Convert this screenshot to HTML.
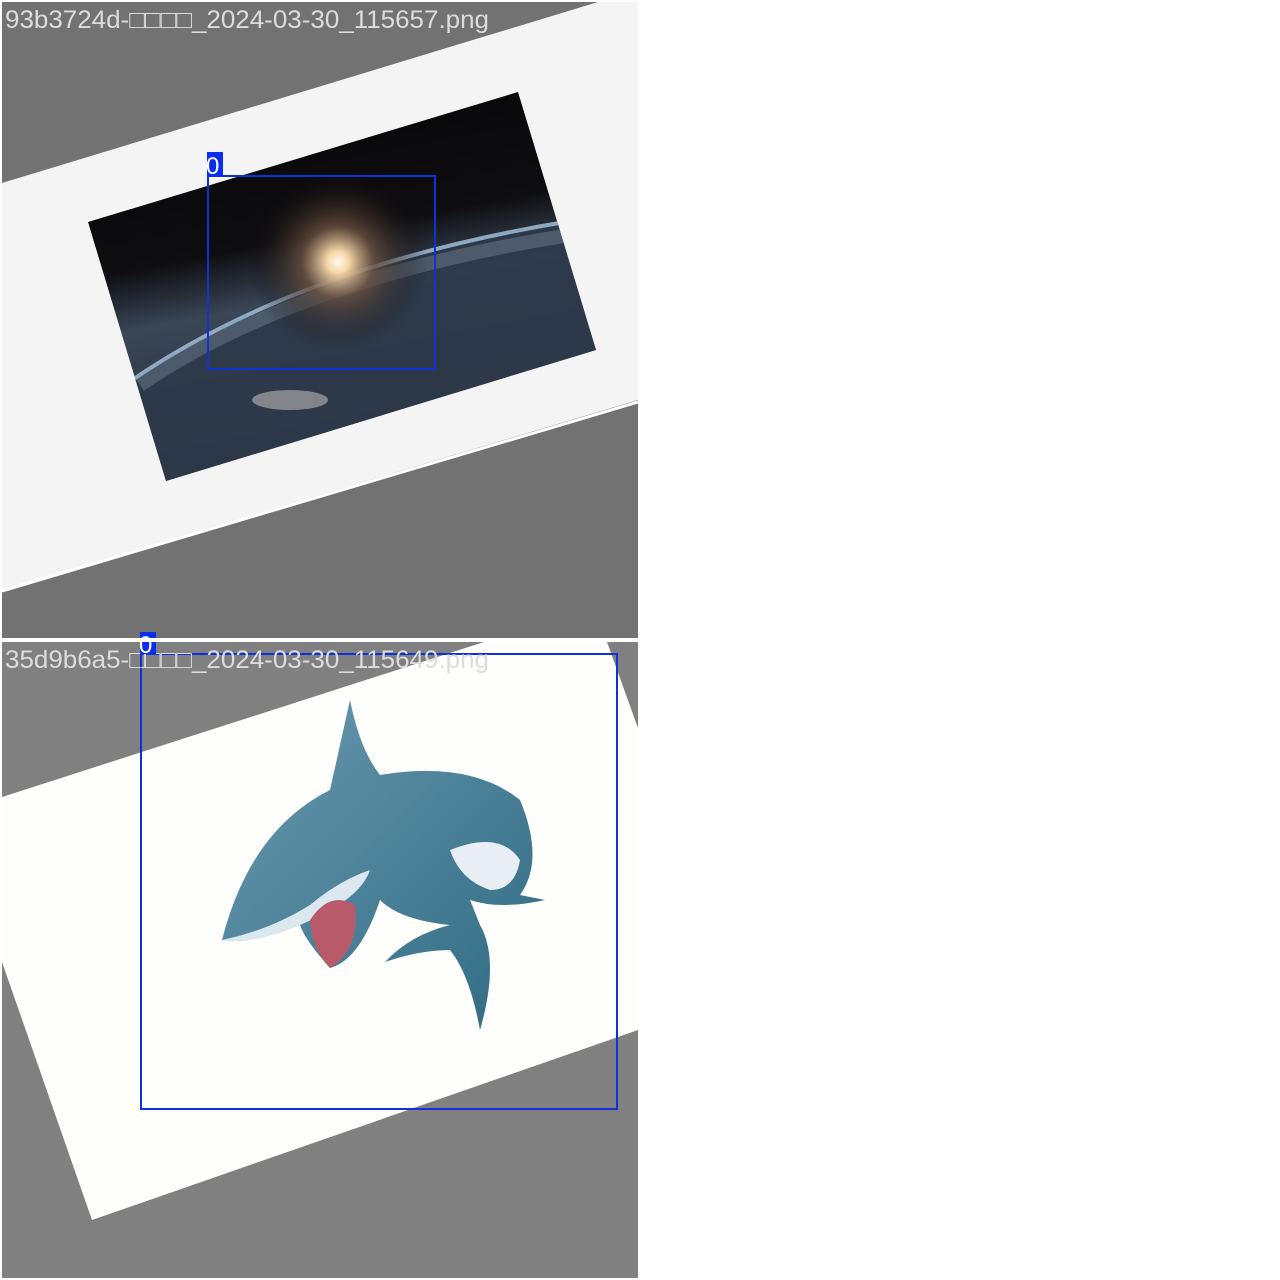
<!DOCTYPE html>
<html><head><meta charset="utf-8"><style>
html,body{margin:0;padding:0;background:#fff;width:1280px;height:1280px;overflow:hidden}
svg{display:block}
</style></head><body>
<svg width="1280" height="1280" viewBox="0 0 1280 1280" xmlns="http://www.w3.org/2000/svg">
<defs>
<radialGradient id="sun" cx="338" cy="262" r="90" gradientUnits="userSpaceOnUse">
<stop offset="0" stop-color="#fffaf0"/><stop offset="0.12" stop-color="#f6d8a8"/><stop offset="0.4" stop-color="#6a5040" stop-opacity="0.8"/><stop offset="1" stop-color="#0c0a0c" stop-opacity="0"/>
</radialGradient>
<linearGradient id="earth" x1="0" y1="0" x2="0.25" y2="1">
<stop offset="0" stop-color="#050404"/><stop offset="0.45" stop-color="#0e0d10"/><stop offset="0.6" stop-color="#3a4656"/><stop offset="1" stop-color="#222a36"/>
</linearGradient>
<linearGradient id="sk" x1="0" y1="0" x2="1" y2="1">
<stop offset="0" stop-color="#6a9ab0"/><stop offset="1" stop-color="#2e6a82"/>
</linearGradient>
<clipPath id="eclip"><polygon points="88,222 518,92 596,350 166,481"/></clipPath>
</defs>
<rect x="2" y="2" width="636" height="636" fill="#727272"/>
<polygon points="2,183 598,2 638,2 638,400 2,590" fill="#f4f4f4"/>
<line x1="2" y1="591" x2="638" y2="402" stroke="#fff" stroke-width="3"/>
<polygon points="88,222 518,92 596,350 166,481" fill="url(#earth)"/>
<g clip-path="url(#eclip)">
<path d="M120,390 Q300,260 600,215 L600,480 L120,480 Z" fill="#2e3a4a" opacity="0.9"/>
<path d="M125,385 Q300,262 590,218" stroke="#a8c4e0" stroke-width="4" fill="none" opacity="0.8"/>
<path d="M140,385 Q300,275 590,232" stroke="#8898a8" stroke-width="14" fill="none" opacity="0.35"/>
<circle cx="338" cy="262" r="90" fill="url(#sun)"/>
<ellipse cx="290" cy="400" rx="38" ry="10" fill="#c8c4c0" opacity="0.55"/>
</g>
<rect x="208" y="176" width="227" height="193" fill="none" stroke="#1030d8" stroke-width="2"/>
<rect x="207" y="152" width="16" height="24" fill="#0a2ef0"/>
<text x="206" y="174" font-family="Liberation Sans, sans-serif" font-size="24" fill="#fff">0</text>
<text x="5" y="28" font-family="Liberation Sans, sans-serif" font-size="25" fill="#dcdcdc" textLength="484" lengthAdjust="spacingAndGlyphs">93b3724d-□□□□_2024-03-30_115657.png</text>
<rect x="2" y="642" width="636" height="636" fill="#808080"/>
<polygon points="2,797 484,642 607,642 638,728 638,1030 92,1220 2,962" fill="#fefefd"/>
<g>
<path d="M222,940 Q250,830 330,790 L350,700 Q360,750 380,775 Q470,760 520,800 Q545,860 520,895 L545,900 Q500,910 470,900 L480,925 Q500,960 480,1030 Q470,975 450,950 Q420,950 385,962 Q410,935 450,925 Q400,920 380,900 Q360,960 330,968 Q305,940 300,925 Q250,945 222,940 Z" fill="url(#sk)"/>
<path d="M222,940 Q270,930 310,905 Q340,880 370,870 Q360,900 300,925 Q250,945 222,940 Z" fill="#dce8f0"/>
<path d="M450,850 Q500,830 520,860 Q515,890 490,890 Q460,880 450,850 Z" fill="#e8eef4"/>
<path d="M310,920 Q330,890 355,905 Q360,950 330,968 Q312,950 310,920 Z" fill="#b85a6a"/>
</g>
<rect x="141" y="654" width="476" height="455" fill="none" stroke="#1030d8" stroke-width="2"/>
<text x="5" y="668" font-family="Liberation Sans, sans-serif" font-size="25" fill="#dcdcdc" textLength="484" lengthAdjust="spacingAndGlyphs">35d9b6a5-□□□□_2024-03-30_115649.png</text>
<rect x="140" y="632" width="16" height="22" fill="#0a2ef0"/>
<text x="139" y="653" font-family="Liberation Sans, sans-serif" font-size="24" fill="#fff">0</text>
<rect x="2" y="638" width="636" height="4" fill="#fff"/>
</svg>
</body></html>
